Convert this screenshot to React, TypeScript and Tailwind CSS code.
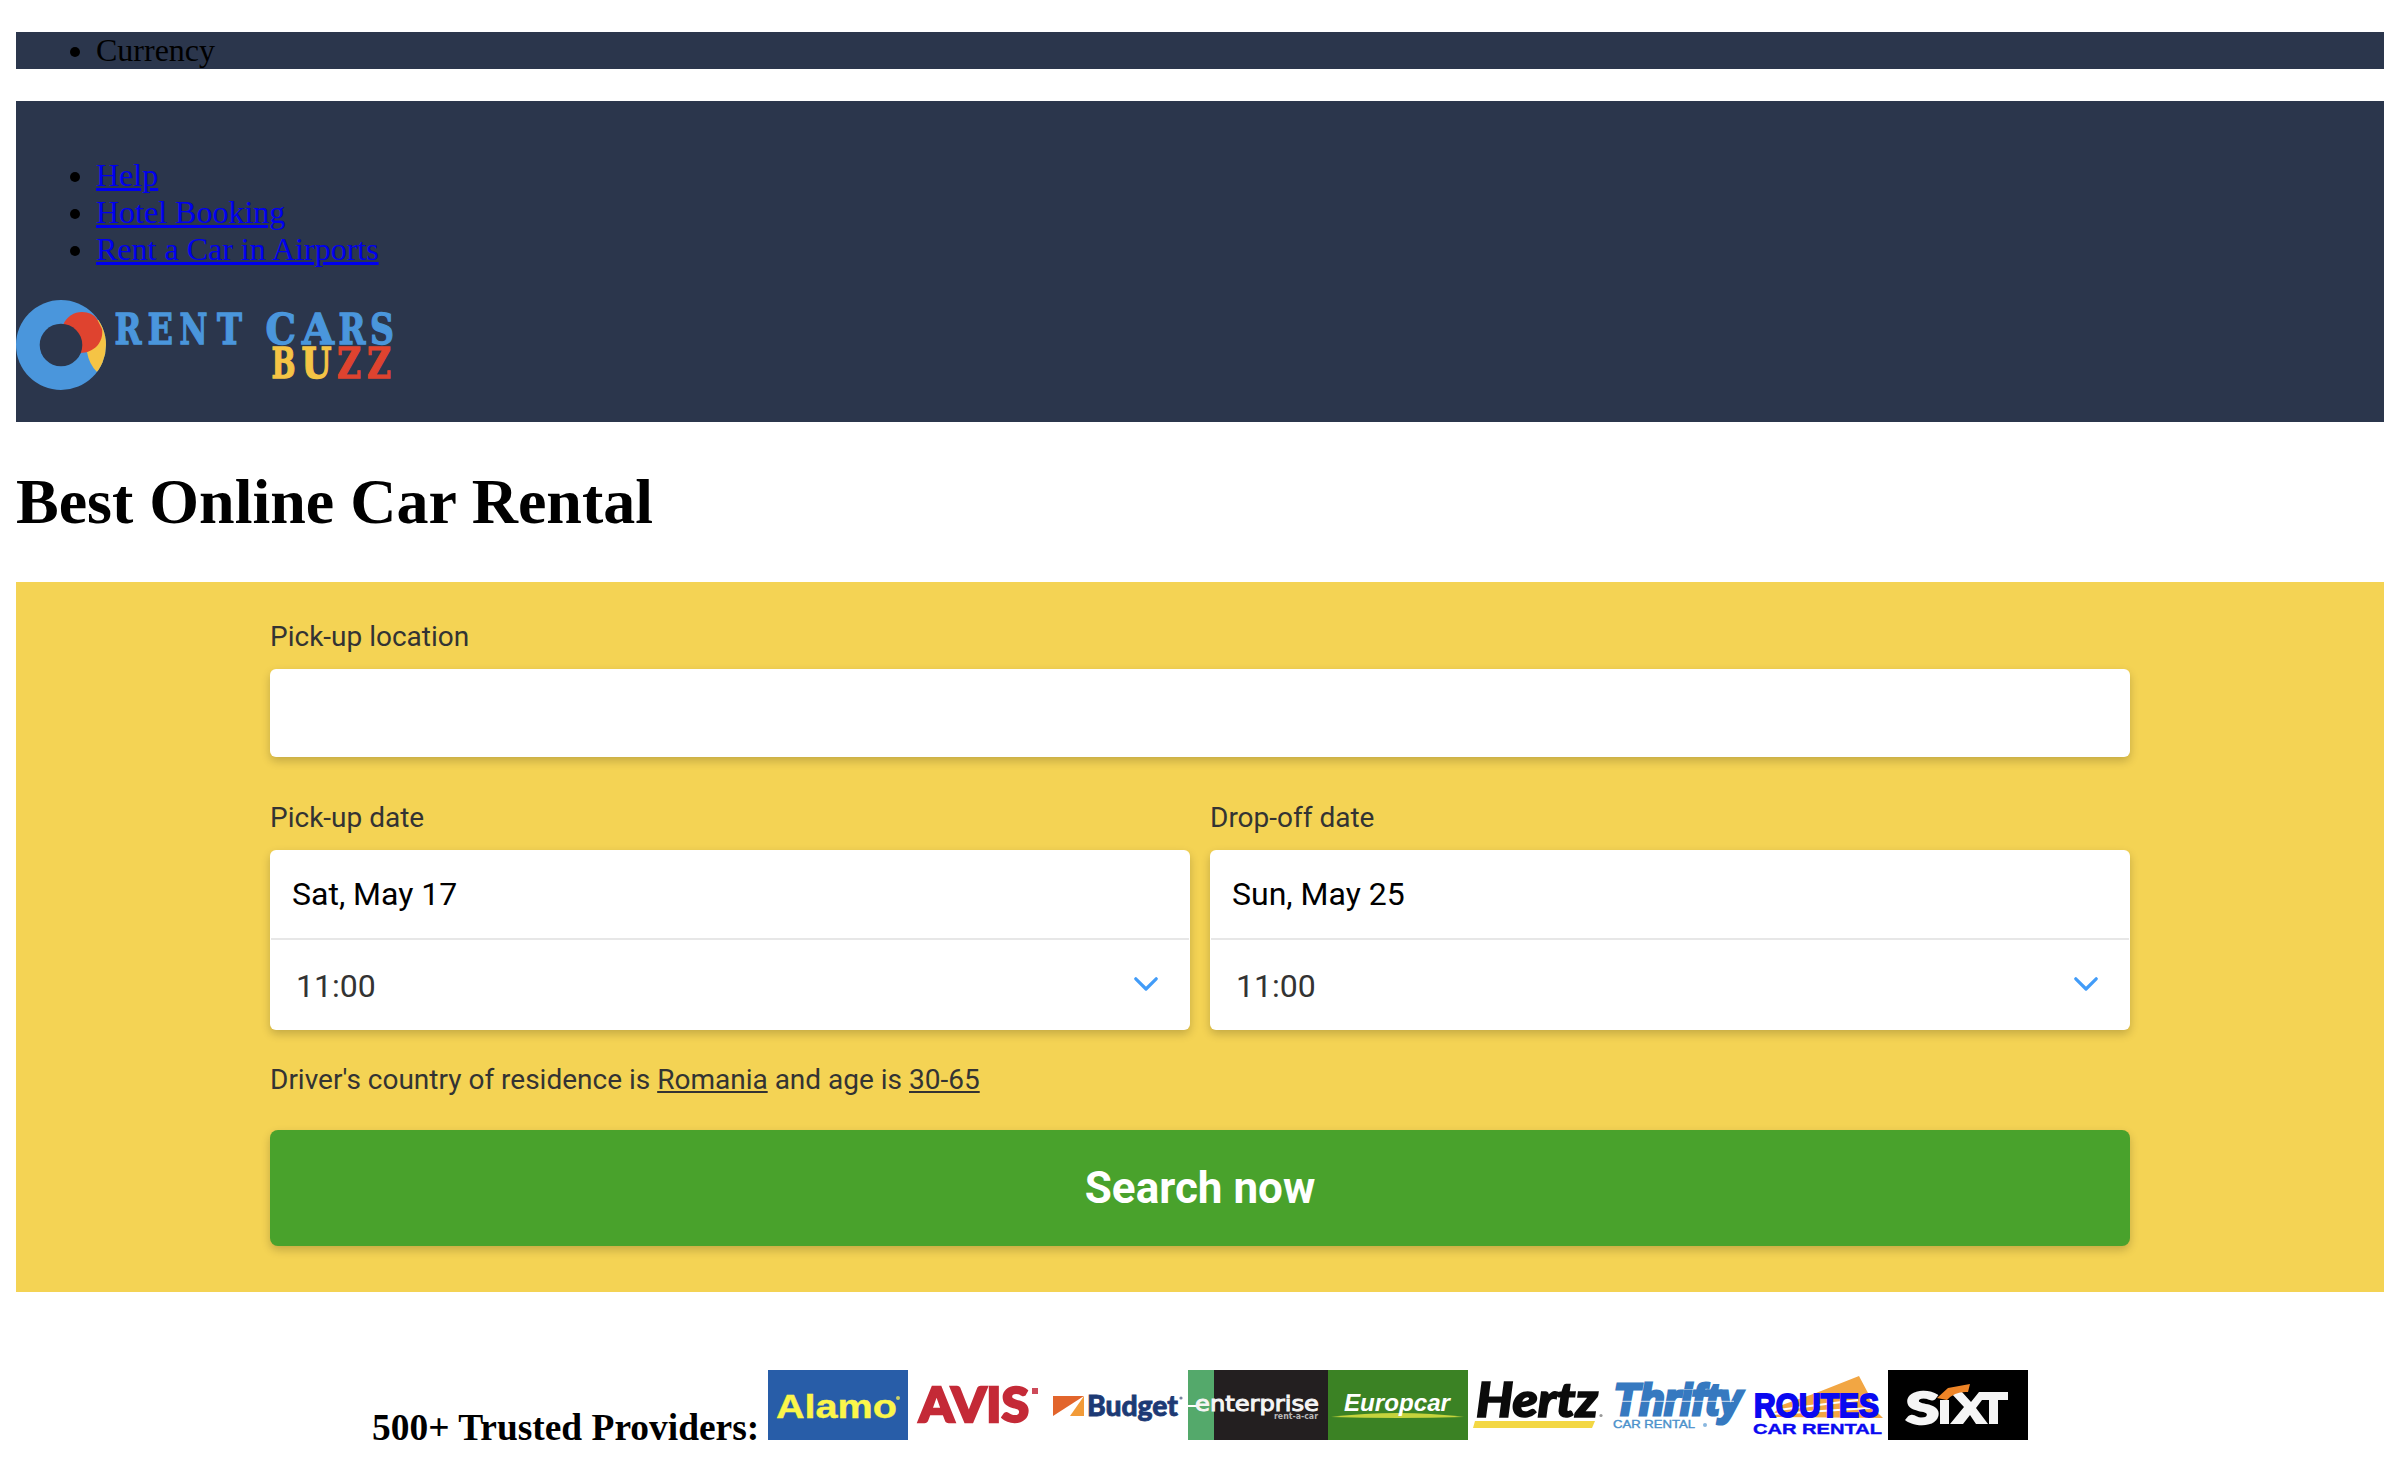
import React from "react";

const wordmark: [string, number, number, number, string][] = [
  ["R", 98.5, 27, 43.5, "#4a96dc"],
  ["E", 131.5, 25.5, 43.5, "#4a96dc"],
  ["N", 163.5, 28, 43.5, "#4a96dc"],
  ["T", 201, 25, 43.5, "#4a96dc"],
  ["C", 249.5, 30.5, 43.5, "#4a96dc"],
  ["A", 286, 32, 43.5, "#4a96dc"],
  ["R", 322.5, 27, 43.5, "#4a96dc"],
  ["S", 354, 24, 43.5, "#4a96dc"],
  ["B", 255.5, 24, 77.5, "#f5c445"],
  ["U", 285.5, 30, 77.5, "#f5c445"],
  ["Z", 321, 24, 77.5, "#df432f"],
  ["Z", 351, 24, 77.5, "#df432f"],
];

function Logo() {
  return (
    <svg width="420" height="90" viewBox="0 0 420 90" className="block" aria-label="Rent Cars Buzz">
      <defs>
        <clipPath id="ring">
          <circle cx="45" cy="45" r="45" />
        </clipPath>
      </defs>
      <circle cx="45" cy="45" r="45" fill="#4a96dc" />
      <path d="M71 45L71 52Q73 64 81 72L96 60V20H80Z" fill="#f5c445" clipPath="url(#ring)" />
      <path d="M47 25C51 16 58 12 66 12Q76 12 81 19L86 29C88 42 78 53 64 53L50 40Z" fill="#df432f" />
      <circle cx="45" cy="45" r="21.3" fill="#2b364c" />
      {wordmark.map(([ch, x, w, y, color], i) => (
        <text
          key={i}
          x={x}
          y={y}
          textLength={w}
          lengthAdjust="spacingAndGlyphs"
          fontFamily="DejaVu Serif, serif"
          fontWeight="700"
          fontSize="42.5"
          fill={color}
          stroke={color}
          strokeWidth="1.3"
        >
          {ch}
        </text>
      ))}
    </svg>
  );
}

interface WordProps {
  x: number;
  y: number;
  w: number;
  size: number;
  fill: string;
  children: string;
  family?: string;
  italic?: boolean;
  weight?: number;
  stroke?: number;
}

function Word({ x, y, w, size, fill, children, family = "Liberation Sans, sans-serif", italic, weight = 700, stroke = 0 }: WordProps) {
  return (
    <text
      x={x}
      y={y}
      textLength={w}
      lengthAdjust="spacingAndGlyphs"
      fontFamily={family}
      fontWeight={weight}
      fontStyle={italic ? "italic" : "normal"}
      fontSize={size}
      fill={fill}
      stroke={fill}
      strokeWidth={stroke}
    >
      {children}
    </text>
  );
}

function Brand({ bg, children }: { bg: string; children: React.ReactNode }) {
  return (
    <svg width="140" height="70" viewBox="0 0 140 70" className="block shrink-0">
      <rect width="140" height="70" fill={bg} />
      {children}
    </svg>
  );
}

function Providers() {
  return (
    <div className="flex">
      <Brand bg="#285da8">
        <Word x={8} y={47.5} w={121} size={34} fill="#fbf64a" stroke={0.4}>Alamo</Word>
        <circle cx="130" cy="28" r="2" fill="#c9d069" />
      </Brand>
      <Brand bg="#ffffff">
        <Word x={11} y={51.5} w={110} size={48} fill="#c42a37" family="Lato, sans-serif" weight={900} stroke={2.4}>AVIS</Word>
        <rect x="124" y="18" width="6" height="6" fill="#cd4a59" />
      </Brand>
      <Brand bg="#ffffff">
        <path d="M5 26H36L5 46Z" fill="#e2652c" />
        <path d="M36 26V46H22Z" fill="#f29b38" />
        <Word x={39} y={45.5} w={91} size={28} fill="#1d3a75" family="Lato, sans-serif" weight={900} stroke={0.8}>Budget</Word>
        <circle cx="133" cy="28" r="1.6" fill="#77839f" />
      </Brand>
      <Brand bg="#231f20">
        <rect width="26" height="70" fill="#54a96b" />
        <path d="M0 36H10" stroke="#fff" strokeWidth="2" />
        <Word x={7} y={41} w={124} size={22} fill="#f5f5f5" family="DejaVu Sans, sans-serif" weight={400} stroke={1}>enterprise</Word>
        <Word x={86} y={48.5} w={44} size={8} fill="#b9b8b9" family="DejaVu Sans, sans-serif">rent-a-car</Word>
      </Brand>
      <Brand bg="#3b8224">
        <path d="M3 47Q70 39 136 47Q70 49 3 47Z" fill="#c5d33d" />
        <Word x={16} y={41} w={106} size={24} fill="#ffffff" italic>Europcar</Word>
      </Brand>
      <Brand bg="#ffffff">
        <Word x={8} y={46.5} w={122} size={47} fill="#0b0b0b" italic family="Lato, sans-serif" weight={900} stroke={1.6}>Hertz</Word>
        <path d="M7 51H127L124 58H5Z" fill="#f3d744" />
        <circle cx="133" cy="45.5" r="1.6" fill="#999" />
      </Brand>
      <Brand bg="#ffffff">
        <Word x={6} y={45} w={128} size={44} fill="#3679c0" italic stroke={3.2}>Thrifty</Word>
        <path d="M9 31.3H126" stroke="#fff" strokeWidth="1" opacity="0.8" />
        <Word x={5} y={58} w={82} size={11.5} fill="#4b91cb" weight={400} stroke={0.4}>CAR RENTAL</Word>
        <circle cx="97" cy="55" r="2" fill="#8ab7df" />
      </Brand>
      <Brand bg="#ffffff">
        <path d="M22 47L34 35L68 23L111 6L120 23Q122 37 135 48Z" fill="#f2a643" />
        <path d="M30 40L110 30M24 44L122 38" stroke="#fff" strokeWidth="2" />
        <Word x={6} y={47} w={125} size={34} fill="#0a08f0" stroke={2}>ROUTES</Word>
        <Word x={5} y={63.5} w={129} size={15.5} fill="#0a08f0" stroke={0.4}>CAR RENTAL</Word>
      </Brand>
      <Brand bg="#000000">
        <Word x={18} y={54} w={33} size={44} fill="#f5f5f5" family="Lato, sans-serif" weight={900} stroke={2.4}>S</Word>
        <path d="M52 30H61V54H52Z" fill="#f5f5f5" />
        <path d="M62 22H74L83 32L91 22H120V30H110V54H101V30H94L88 38L100 54H88L82 45L75 54H62L76 37Z" fill="#f5f5f5" />
        <path d="M49 28L60 18L82 14L80 22Q67 21 59 30Z" fill="#ee8426" />
      </Brand>
    </div>
  );
}

function DateCard({ label, date }: { label: string; date: string }) {
  return (
    <div className="flex-1">
      <div className="mb-4 text-[28px] leading-[33px]">{label}</div>
      <div className="h-[180px] rounded-md bg-white shadow-[0_4px_10px_rgba(0,0,0,0.2)]">
        <div className="flex h-[88px] items-center px-[22px] text-[32px] text-black">{date}</div>
        <div className="mx-px h-0.5 bg-[#e7e7e7]" />
        <div className="flex h-[90px] items-center justify-between pr-8 pl-[26px] text-[32px]">
          <span className="pt-0.5">11:00</span>
          <svg width="24" height="14" viewBox="0 0 24 14" fill="none" className="mt-[-2px]">
            <path d="M1.8 1.8L12 12L22.2 1.8" stroke="#429cf8" strokeWidth="3.2" strokeLinecap="round" strokeLinejoin="round" />
          </svg>
        </div>
      </div>
    </div>
  );
}

export default function App() {
  return (
    <div className="h-[1472px] overflow-hidden bg-white px-4 pt-8 font-['Liberation_Serif',serif] text-[32px] leading-[37px] text-black">
      <ul className="h-[37px] list-disc bg-[#2b364c] pl-20">
        <li>Currency</li>
      </ul>
      <header className="mt-8 h-[321px] bg-[#2b364c] pt-14">
        <ul className="mb-8 list-disc pl-20">
          {["Help", "Hotel Booking", "Rent a Car in Airports"].map((item) => (
            <li key={item}>
              <a href="#" className="text-[#0000ee] underline">{item}</a>
            </li>
          ))}
        </ul>
        <Logo />
      </header>
      <h1 className="my-[43px] text-[64px] leading-[74px] font-bold">Best Online Car Rental</h1>
      <main className="h-[710px] bg-[#f4d354] px-[254px] pt-[38px] font-[Roboto,sans-serif] text-[#333]">
        <div className="mb-4 text-[28px] leading-[33px]">Pick-up location</div>
        <div className="h-[88px] rounded-md bg-white shadow-[0_4px_10px_rgba(0,0,0,0.2)]" />
        <div className="mt-11 flex gap-5">
          <DateCard label="Pick-up date" date="Sat, May 17" />
          <DateCard label="Drop-off date" date="Sun, May 25" />
        </div>
        <p className="mt-[33px] text-[28px] leading-[33px]">
          Driver's country of residence is <span className="underline">Romania</span> and age is{" "}
          <span className="underline">30-65</span>
        </p>
        <button className="mt-[34px] flex h-[116px] w-full items-center justify-center rounded-lg bg-[#49a22c] text-[44px] font-bold text-white shadow-[0_4px_10px_rgba(0,0,0,0.2)]">
          Search now
        </button>
      </main>
      <div className="mt-[78px] flex items-baseline justify-center">
        <h3 className="w-[396px] text-[37.44px] leading-[43px] font-bold whitespace-nowrap">500+ Trusted Providers:</h3>
        <Providers />
      </div>
    </div>
  );
}
